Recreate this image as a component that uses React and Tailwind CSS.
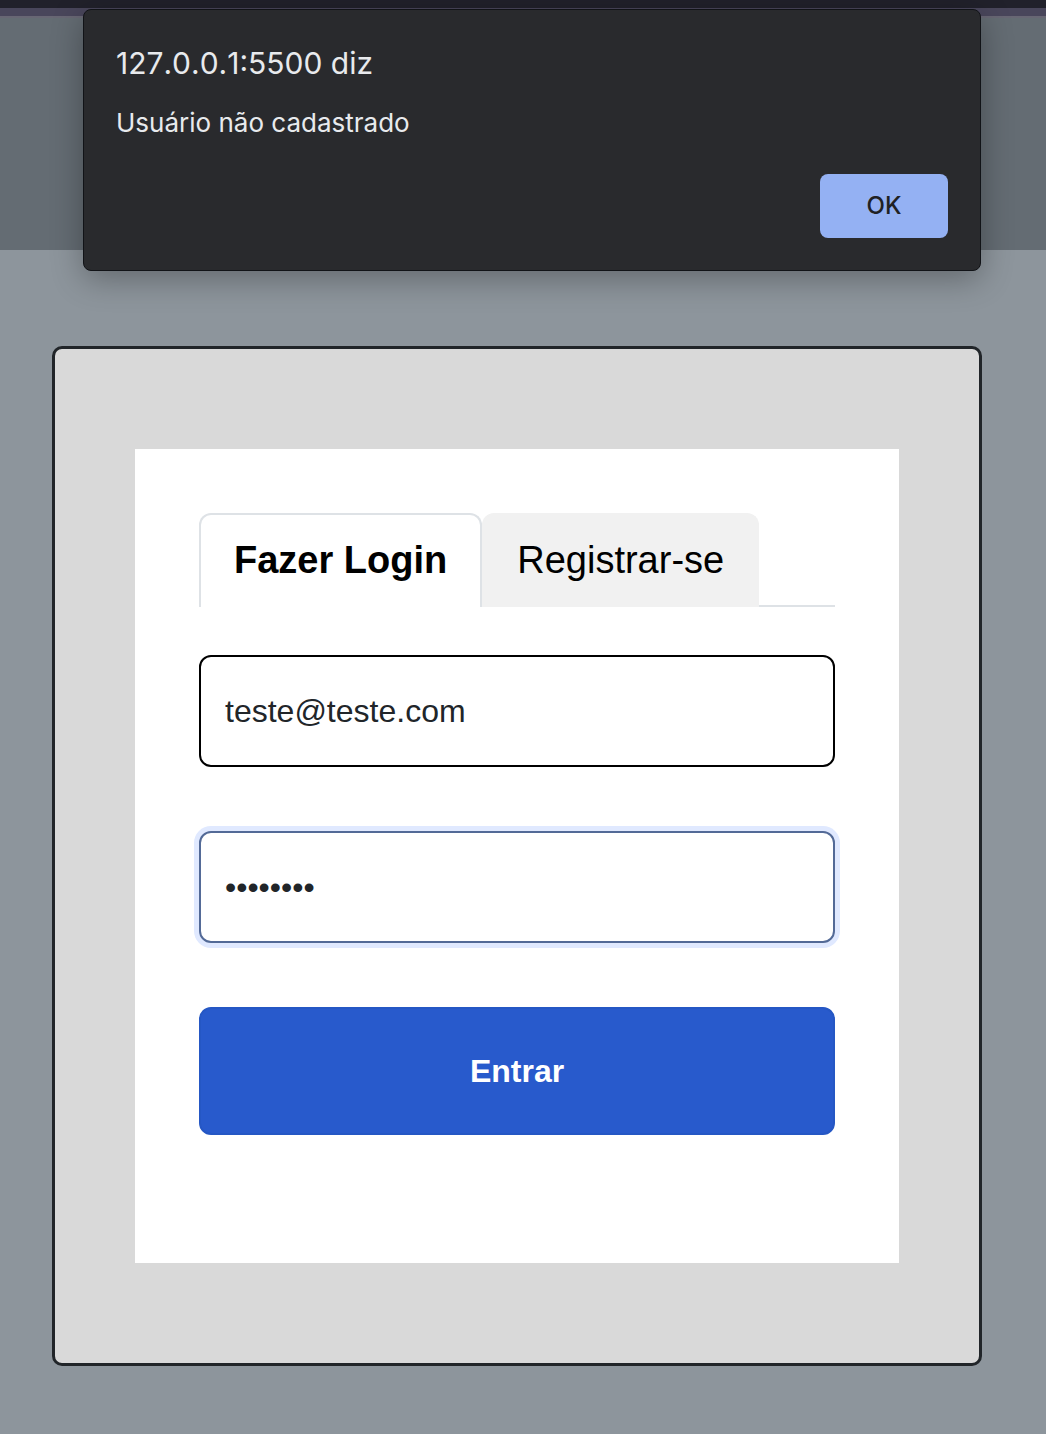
import { useState } from "react";

const fieldClass =
  "block h-28 w-full rounded-xl border-2 bg-white px-6 text-[32px] leading-12 text-[#212529] outline-none";

function AlertDialog() {
  return (
    <div
      role="alertdialog"
      aria-labelledby="alert-title"
      aria-describedby="alert-message"
      className="absolute top-[9px] right-[65px] left-[83px] flex flex-col rounded-lg border border-[#111317] bg-[#292a2d] px-8 pt-8 pb-8 font-['Inter',sans-serif] text-[#e8eaed] shadow-[0_8px_32px_rgba(0,0,0,0.3)]"
    >
      <h1 id="alert-title" className="text-[30px] leading-[42px] font-normal [font-kerning:none]">
        127.0.0.1:5500 diz
      </h1>
      <p id="alert-message" className="mt-5 text-[26px] leading-[38px]">
        Usuário não cadastrado
      </p>
      <button
        type="button"
        className="mt-8 h-16 w-32 self-end rounded-lg bg-[#94b1f3] text-2xl font-medium text-[#202124]"
      >
        OK
      </button>
    </div>
  );
}

function LoginCard() {
  const [email, setEmail] = useState("teste@teste.com");
  const [password, setPassword] = useState("12345678");

  return (
    <main className="mt-24 mr-16 mb-[68px] ml-[52px] rounded-[10px] border-3 border-[#212529] bg-[#d9d9d9] px-20 py-[100px]">
      <div className="bg-white px-16 pt-16 pb-32">
        <div role="tablist" className="flex text-[38px] leading-[58px] text-black">
          <button
            type="button"
            role="tab"
            aria-selected="true"
            className="rounded-t-xl border-2 border-b-0 border-[#dee2e6] bg-white px-[33px] pt-4 pb-[18px] font-bold whitespace-nowrap"
          >
            Fazer Login
          </button>
          <button
            type="button"
            role="tab"
            aria-selected="false"
            className="rounded-t-xl border-2 border-b-0 border-[#f1f1f1] bg-[#f1f1f1] px-[33px] pt-4 pb-[18px] whitespace-nowrap"
          >
            Registrar-se
          </button>
          <div className="flex-1 border-b-2 border-[#dee2e6]" />
        </div>
        <form className="mt-12 flex flex-col gap-16" onSubmit={(e) => e.preventDefault()}>
          <input
            type="email"
            aria-label="E-mail"
            value={email}
            onChange={(e) => setEmail(e.target.value)}
            className={`${fieldClass} border-black`}
          />
          <input
            type="password"
            aria-label="Senha"
            value={password}
            onChange={(e) => setPassword(e.target.value)}
            className={`${fieldClass} border-[#536a97] ring-5 ring-[#e0e9ff]`}
          />
          <button
            type="submit"
            className="h-32 w-full rounded-xl border-2 border-[#2557c4] bg-[#285acc] text-[32px] leading-12 font-bold text-white"
          >
            Entrar
          </button>
        </form>
      </div>
    </main>
  );
}

export default function App() {
  return (
    <div className="relative flex min-h-screen flex-col bg-[#8d959c] font-['Liberation_Sans',sans-serif]">
      <div className="h-2 bg-[#21212b]" />
      <div className="h-2 bg-[#49465b]" />
      <header className="h-[234px] border-t-2 border-[#686774] bg-[#646c73]" />
      <LoginCard />
      <AlertDialog />
    </div>
  );
}
